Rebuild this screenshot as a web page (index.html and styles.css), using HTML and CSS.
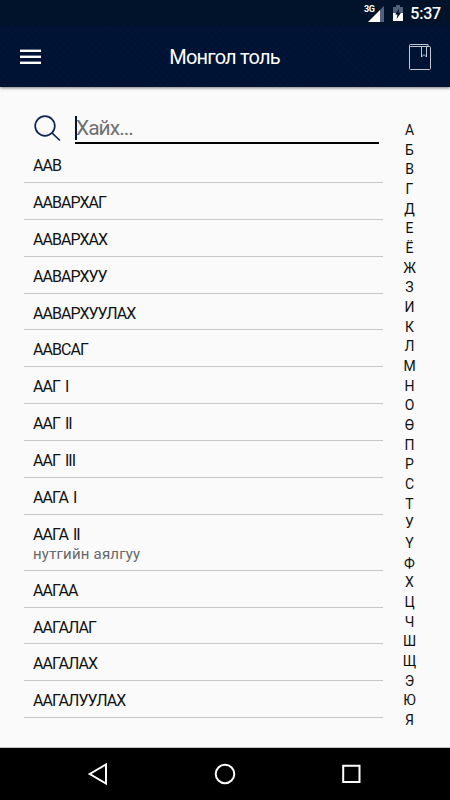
FILE: index.html
```
<!doctype html>
<html lang="mn">

<head>
  <meta charset="UTF-8" />
  <meta name="viewport" content="width=device-width, initial-scale=1.0" />
  <title>Монгол толь</title>
  <link rel="stylesheet" href="styles.css">
</head>

<body>
  <div class="status-bar">
    <svg class="signal" viewBox="0 0 20 17">
      <path class="dim" d="M20 1v16h-5V6z" />
      <path d="M16 5v12H4z" />
    </svg>
    <span class="network">3G</span>
    <svg class="battery" viewBox="0 0 10 16">
      <path class="dim" d="M3 0h4v2h3v7H0V2h3z" />
      <path d="M0 8h10v8H0z" />
      <path class="bolt" d="M6.2 3.5L2 9.6h2.4L3.6 14 8 7.8H5.5z" />
    </svg>
    <span class="clock">5:37</span>
  </div>

  <header>
    <button class="menu-button" aria-label="Цэс">
      <span></span><span></span><span></span>
    </button>
    <h1>Монгол толь</h1>
    <button class="book-button" aria-label="Хадгалсан">
      <svg viewBox="0 0 24 28">
        <path d="M1.5 2.500V25.500q0 1 1 1h19q1 0 1-1V4.500q0-1-1-1h-19q-1 0-1-1t1-1H20v2" />
        <path d="M13.500 3.500v10.500l2.500-2.500 2.500 2.500v-10.500" />
      </svg>
    </button>
  </header>

  <main>
    <section class="dictionary">
      <div class="search">
        <svg viewBox="0 0 28 28">
          <circle cx="11" cy="11" r="9.800" />
          <path d="M18 18l8 7.500" />
        </svg>
        <div class="search-field">Хайх...</div>
      </div>
      <ul class="words">
        <li>ААВ</li>
        <li>ААВАРХАГ</li>
        <li>ААВАРХАХ</li>
        <li>ААВАРХУУ</li>
        <li>ААВАРХУУЛАХ</li>
        <li>ААВСАГ</li>
        <li>ААГ I</li>
        <li>ААГ II</li>
        <li>ААГ III</li>
        <li>ААГА I</li>
        <li>ААГА II<small>нутгийн аялгуу</small></li>
        <li>ААГАА</li>
        <li>ААГАЛАГ</li>
        <li>ААГАЛАХ</li>
        <li>ААГАЛУУЛАХ</li>
      </ul>
    </section>
    <nav class="letters">
      <span>А</span><span>Б</span><span>В</span><span>Г</span><span>Д</span><span>Е</span><span>Ё</span><span>Ж</span>
      <span>З</span><span>И</span><span>К</span><span>Л</span><span>М</span><span>Н</span><span>О</span><span>Ө</span>
      <span>П</span><span>Р</span><span>С</span><span>Т</span><span>У</span><span>Ү</span><span>Ф</span><span>Х</span>
      <span>Ц</span><span>Ч</span><span>Ш</span><span>Щ</span><span>Э</span><span>Ю</span><span>Я</span>
    </nav>
  </main>

  <footer>
    <svg viewBox="0 0 24 24"><path d="M19 2.500v19L2.800 12z" /></svg>
    <svg viewBox="0 0 24 24"><circle cx="12" cy="12" r="9.300" /></svg>
    <svg viewBox="0 0 24 24"><path d="M4.200 3.700h16.300v16.300H4.200z" /></svg>
  </footer>
</body>

</html>
```
FILE: styles.css
```
:root {
  --bg-color: #fafafa;
  --status-bg: #00132b;
  --header-bg: #001335;
  --line-color: #c8c8c8;
}

* {
  margin: 0;
  padding: 0;
  box-sizing: border-box;
}

body {
  width: 450px;
  height: 800px;
  background: var(--bg-color);
  color: #111;
  font-family: Roboto, "Noto Sans", sans-serif;
  overflow: hidden;
  display: flex;
  flex-direction: column;
}

.status-bar {
  height: 26px;
  padding: 0 9px 0 0;
  background: var(--status-bg);
  color: #fff;
  display: flex;
  align-items: center;
  justify-content: flex-end;
  position: relative;
}

.status-bar svg {
  fill: #fff;
}

.status-bar .dim {
  fill: #51617a;
}

.status-bar .bolt {
  fill: var(--status-bg);
}

.signal {
  width: 20px;
  height: 17px;
  margin-right: 9px;
}

.network {
  position: absolute;
  left: 364px;
  top: 4px;
  font-size: 9px;
  font-weight: 700;
  line-height: 10px;
  letter-spacing: -0.5px;
}

.battery {
  width: 10px;
  height: 16px;
  margin-right: 7px;
}

.clock {
  padding-top: 2px;
  font-size: 16px;
  font-weight: 500;
  line-height: 26px;
  letter-spacing: -0.2px;
}

header {
  height: 61px;
  padding: 0 18px 0 20px;
  background:
    repeating-linear-gradient(45deg, rgba(255, 255, 255, 0.008) 0 1px, transparent 1px 5px),
    repeating-linear-gradient(-45deg, rgba(0, 0, 0, 0.06) 0 1px, transparent 1px 5px),
    var(--header-bg);
  box-shadow: 0 1px 3px rgba(0, 0, 0, 0.5);
  color: #fff;
  display: flex;
  align-items: center;
  justify-content: space-between;
}

header button {
  border: none;
  background: transparent;
}

.menu-button {
  width: 21px;
  display: flex;
  flex-direction: column;
  gap: 4px;
}

.menu-button span {
  height: 2px;
  background: #fff;
  box-shadow: 0 -1px rgba(255, 255, 255, 0.4);
}

h1 {
  padding-top: 1px;
  font-size: 20px;
  font-weight: 400;
  letter-spacing: -0.8px;
  white-space: nowrap;
}

.book-button svg {
  display: block;
  width: 24px;
  height: 28px;
  fill: none;
  stroke: #c3c8d2;
  stroke-width: 1;
}

main {
  flex: 1;
  border-bottom: 1px solid #c4c4c4;
  display: flex;
}

.dictionary {
  width: 359px;
  margin-left: 24px;
  padding-top: 25px;
}

.search {
  height: 34px;
  display: flex;
}

.search svg {
  width: 28px;
  height: 28px;
  margin: 3px 13px 0 10px;
  fill: none;
  stroke: #0d2455;
  stroke-width: 1.7;
}

.search-field {
  width: 304px;
  height: 32px;
  padding-top: 2px;
  border-bottom: 2px solid #000;
  color: #707070;
  font-size: 21px;
  line-height: 28px;
  letter-spacing: -1px;
  display: flex;
  align-items: center;
}

.search-field::before {
  content: '';
  width: 2px;
  height: 24px;
  margin-top: -1px;
  margin-right: -1px;
  background: #00132b;
}

.words {
  list-style: none;
}

.words li {
  height: 36.9px;
  padding-left: 9px;
  border-bottom: 1px solid var(--line-color);
  font-size: 16px;
  line-height: 39px;
  letter-spacing: -0.95px;
  word-spacing: 2px;
}

.words li:has(small) {
  height: 55.8px;
}

.words small {
  display: block;
  margin-top: -9px;
  color: #686868;
  font-size: 15px;
  line-height: 19px;
  letter-spacing: 0.2px;
  word-spacing: 0;
}

.letters {
  width: 53px;
  padding-top: 34px;
  display: flex;
  flex-direction: column;
  align-items: center;
  font-size: 14px;
}

.letters span {
  height: 19.68px;
  line-height: 19.68px;
}

footer {
  height: 52px;
  background: #000;
  display: flex;
  align-items: center;
  justify-content: center;
  gap: 102px;
}

footer svg {
  width: 24px;
  height: 24px;
  fill: none;
  stroke: #fff;
  stroke-width: 2;
}
```
